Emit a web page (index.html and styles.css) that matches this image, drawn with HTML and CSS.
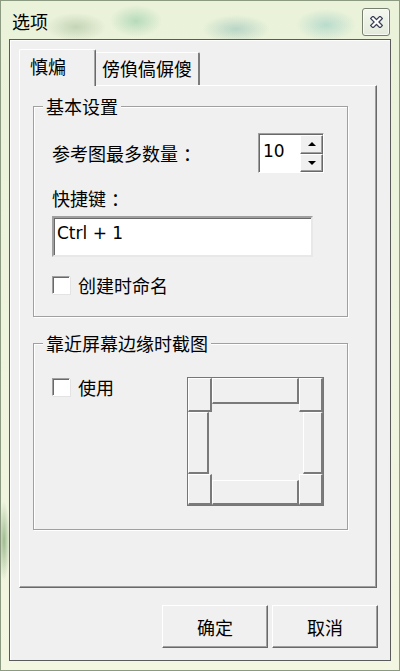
FILE: index.html
```html
<!DOCTYPE html>
<html lang="zh-CN">
<head>
<meta charset="utf-8">
<title>选项</title>
<link rel="stylesheet" href="styles.css">
</head>
<body>
<div class="window">
  <div class="titlebar">
    <span class="title">选项</span>
    <button class="close" aria-label="关闭">
      <svg width="13" height="12" viewBox="0 0 13 12">
        <path d="M3 2.5 L10 9.5 M10 2.5 L3 9.5" stroke="#3a3f55" stroke-width="4.6" stroke-linecap="square" fill="none"/>
        <path d="M3 2.5 L10 9.5 M10 2.5 L3 9.5" stroke="#ffffff" stroke-width="2.2" stroke-linecap="square" fill="none"/>
      </svg>
    </button>
  </div>
  <div class="client">
    <div class="tabs">
      <div class="tab active">慎煸</div>
      <div class="tab">傍偩傐偋傻</div>
    </div>
    <div class="panel">
      <div class="group">
        <div class="group-title">基本设置</div>
        <div class="row-spin">
          <span class="label">参考图最多数量<span class="colon">：</span></span>
          <div class="spin">
            <span class="spin-value">10</span>
            <div class="spin-buttons">
              <div class="spin-btn"><span class="arrow up"></span></div>
              <div class="spin-btn"><span class="arrow down"></span></div>
            </div>
          </div>
        </div>
        <div class="label label-key">快捷键<span class="colon">：</span></div>
        <div class="textbox">Ctrl + 1</div>
        <div class="check-row check-first">
          <span class="checkbox"></span>
          <span class="label">创建时命名</span>
        </div>
      </div>
      <div class="group group-edge">
        <div class="group-title">靠近屏幕边缘时截图</div>
        <div class="edge-row">
          <div class="check-row">
            <span class="checkbox"></span>
            <span class="label">使用</span>
          </div>
          <div class="edges">
            <div class="cell c-tl"></div>
            <div class="cell c-t"></div>
            <div class="cell c-tr"></div>
            <div class="cell c-l"></div>
            <div class="c-mid"></div>
            <div class="cell c-r"></div>
            <div class="cell c-bl"></div>
            <div class="cell c-b"></div>
            <div class="cell c-br"></div>
          </div>
        </div>
      </div>
    </div>
    <div class="buttons">
      <button class="btn">确定</button>
      <button class="btn">取消</button>
    </div>
  </div>
</div>
</body>
</html>
```

FILE: styles.css
```css
html, body {
  margin: 0;
  padding: 0;
}

body {
  width: 400px;
  height: 671px;
  overflow: hidden;
  font-family: "Noto Sans CJK SC", "Noto Sans", sans-serif;
  font-size: 18px;
  color: #000;
}

.window {
  box-sizing: border-box;
  width: 400px;
  height: 671px;
  border: 1px solid #8c9a82;
  background:
    radial-gradient(ellipse 30px 14px at 75px 26px, rgba(150,175,140,0.45), rgba(150,175,140,0) 100%),
    radial-gradient(ellipse 26px 16px at 135px 20px, rgba(120,190,150,0.45), rgba(120,190,150,0) 100%),
    radial-gradient(ellipse 34px 14px at 235px 28px, rgba(110,170,170,0.40), rgba(110,170,170,0) 100%),
    radial-gradient(ellipse 30px 16px at 325px 24px, rgba(110,185,185,0.40), rgba(110,185,185,0) 100%),
    radial-gradient(ellipse 6px 40px at 3px 540px, rgba(90,140,80,0.55), rgba(90,140,80,0) 100%),
    linear-gradient(180deg, #eaf2d9 0%, #eef4de 50%, #f3f6e0 100%);
}

.titlebar {
  display: flex;
  justify-content: space-between;
  align-items: flex-start;
  height: 38px;
  padding: 7px 9px 0 11px;
  box-sizing: border-box;
}

.title {
  margin-top: 3px;
  line-height: 20px;
  font-size: 18px;
}

.close {
  width: 28px;
  height: 28px;
  padding: 0;
  border: 1px solid #76806e;
  border-radius: 3px;
  background: linear-gradient(180deg, #f4f7ef 0%, #e3eadb 100%);
  box-shadow: inset 0 0 0 1px rgba(255,255,255,0.7);
  display: flex;
  align-items: center;
  justify-content: center;
}

.client {
  box-sizing: border-box;
  width: 382px;
  height: 622px;
  margin-left: 8px;
  border: 1px solid #5a5a5a;
  background: #f0f0f0;
  box-shadow: inset 1px 1px 0 #fdfdfd;
  padding: 9px 13px 0 9px;
}

.tabs {
  display: flex;
  align-items: flex-end;
  height: 36px;
}

.tab {
  box-sizing: border-box;
  height: 33px;
  line-height: 30px;
  padding: 0 6px 0 6px;
  background: #f0f0f0;
  border-top: 1px solid #ffffff;
  border-right: 2px solid #7c7c7c;
  border-top-right-radius: 2px;
  white-space: nowrap;
}

.tab.active {
  position: relative;
  z-index: 1;
  width: 77px;
  height: 37px;
  margin-bottom: -1px;
  line-height: 32px;
  padding-left: 10px;
  border-left: 1px solid #ffffff;
  border-right: 1px solid #6a6a6a;
  box-shadow: inset -1px 0 0 #a5a5a5;
  border-top-left-radius: 2px;
}

.panel {
  box-sizing: border-box;
  width: 358px;
  height: 503px;
  background: #f0f0f0;
  border-top: 1px solid #ffffff;
  border-left: 1px solid #ffffff;
  border-right: 1px solid #696969;
  border-bottom: 1px solid #696969;
  box-shadow: inset -1px -1px 0 #a0a0a0;
  padding: 20px 0 0 13px;
}

.group {
  box-sizing: border-box;
  width: 315px;
  border: 1px solid #a0a0a0;
  box-shadow: inset 1px 1px 0 #ffffff, 1px 1px 0 #ffffff;
  padding: 0 23px 21px 18px;
}

.group-title {
  width: fit-content;
  margin: -11px 0 0 -9px;
  padding: 0 3px;
  height: 20px;
  line-height: 20px;
  background: #f0f0f0;
}

.label {
  line-height: 20px;
}

.colon {
  display: inline-block;
  width: 18px;
  padding-left: 5px;
  box-sizing: border-box;
}

.row-spin {
  display: flex;
  justify-content: space-between;
  align-items: center;
  margin-top: 17px;
  height: 40px;
}

.spin {
  box-sizing: border-box;
  display: flex;
  width: 66px;
  height: 40px;
  background: #ffffff;
  border-top: 1px solid #a0a0a0;
  border-left: 1px solid #a0a0a0;
  border-right: 1px solid #ffffff;
  border-bottom: 1px solid #ffffff;
  box-shadow: inset 1px 1px 0 #696969;
}

.spin-value {
  flex: 1;
  padding: 5px 0 0 4px;
  line-height: 24px;
  font-family: "DejaVu Sans", sans-serif;
  font-size: 17px;
}

.spin-buttons {
  display: flex;
  flex-direction: column;
  width: 23px;
  padding-top: 1px;
}

.spin-btn {
  box-sizing: border-box;
  flex: 1;
  display: flex;
  align-items: center;
  justify-content: center;
  background: #f0f0f0;
  border-top: 1px solid #ffffff;
  border-left: 1px solid #ffffff;
  border-right: 1px solid #696969;
  border-bottom: 1px solid #696969;
  box-shadow: inset -1px -1px 0 #a0a0a0;
}

.arrow {
  width: 0;
  height: 0;
  border-left: 4px solid transparent;
  border-right: 4px solid transparent;
}

.arrow.up {
  border-bottom: 4px solid #000;
}

.arrow.down {
  border-top: 4px solid #000;
}

.label-key {
  margin-top: 15px;
}

.textbox {
  box-sizing: border-box;
  width: 261px;
  height: 41px;
  margin-top: 8px;
  background: #ffffff;
  border-top: 2px solid #a0a0a0;
  border-left: 2px solid #a0a0a0;
  border-right: 2px solid #e8e8e8;
  border-bottom: 2px solid #e8e8e8;
  box-shadow: inset 1px 1px 0 #696969;
  padding: 4px 0 0 3px;
  line-height: 22px;
  font-family: "DejaVu Sans", sans-serif;
  font-size: 17px;
}

.check-row {
  display: flex;
  align-items: center;
  gap: 8px;
  height: 20px;
}

.check-first {
  margin-top: 18px;
}

.checkbox {
  box-sizing: border-box;
  width: 18px;
  height: 18px;
  background: #ffffff;
  border-top: 1px solid #a0a0a0;
  border-left: 1px solid #a0a0a0;
  border-right: 1px solid #ffffff;
  border-bottom: 1px solid #ffffff;
  box-shadow: inset 1px 1px 0 #696969, 1px 1px 0 #e3e3e3;
}

.group-edge {
  margin-top: 26px;
  padding-bottom: 23px;
}

.edge-row {
  display: flex;
  justify-content: space-between;
  align-items: flex-start;
  margin-top: 24px;
}

.edges {
  box-sizing: border-box;
  width: 137px;
  height: 129px;
  border: 1px solid #767676;
  display: grid;
  grid-template-columns: 24px 87px 24px;
  grid-template-rows: 34px 62px 31px;
}

.cell {
  box-sizing: border-box;
  background: #f0f0f0;
  border-top: 1px solid #ffffff;
  border-left: 1px solid #ffffff;
  border-right: 2px solid #7a7a7a;
  border-bottom: 2px solid #7a7a7a;
}

.c-t {
  height: 26px;
  align-self: start;
}

.c-l {
  width: 21px;
  justify-self: start;
}

.c-r {
  width: 20px;
  justify-self: end;
}

.c-b {
  height: 25px;
  align-self: end;
}

.buttons {
  display: flex;
  justify-content: flex-end;
  gap: 4px;
  margin-top: 17px;
  margin-right: -1px;
}

.btn {
  box-sizing: border-box;
  width: 106px;
  height: 43px;
  padding: 0;
  font-family: "Noto Sans CJK SC", "Noto Sans", sans-serif;
  font-size: 18px;
  color: #000;
  background: #f0f0f0;
  border-top: 1px solid #ffffff;
  border-left: 1px solid #ffffff;
  border-right: 1px solid #696969;
  border-bottom: 1px solid #696969;
  box-shadow: inset -1px -1px 0 #a0a0a0;
}
```
